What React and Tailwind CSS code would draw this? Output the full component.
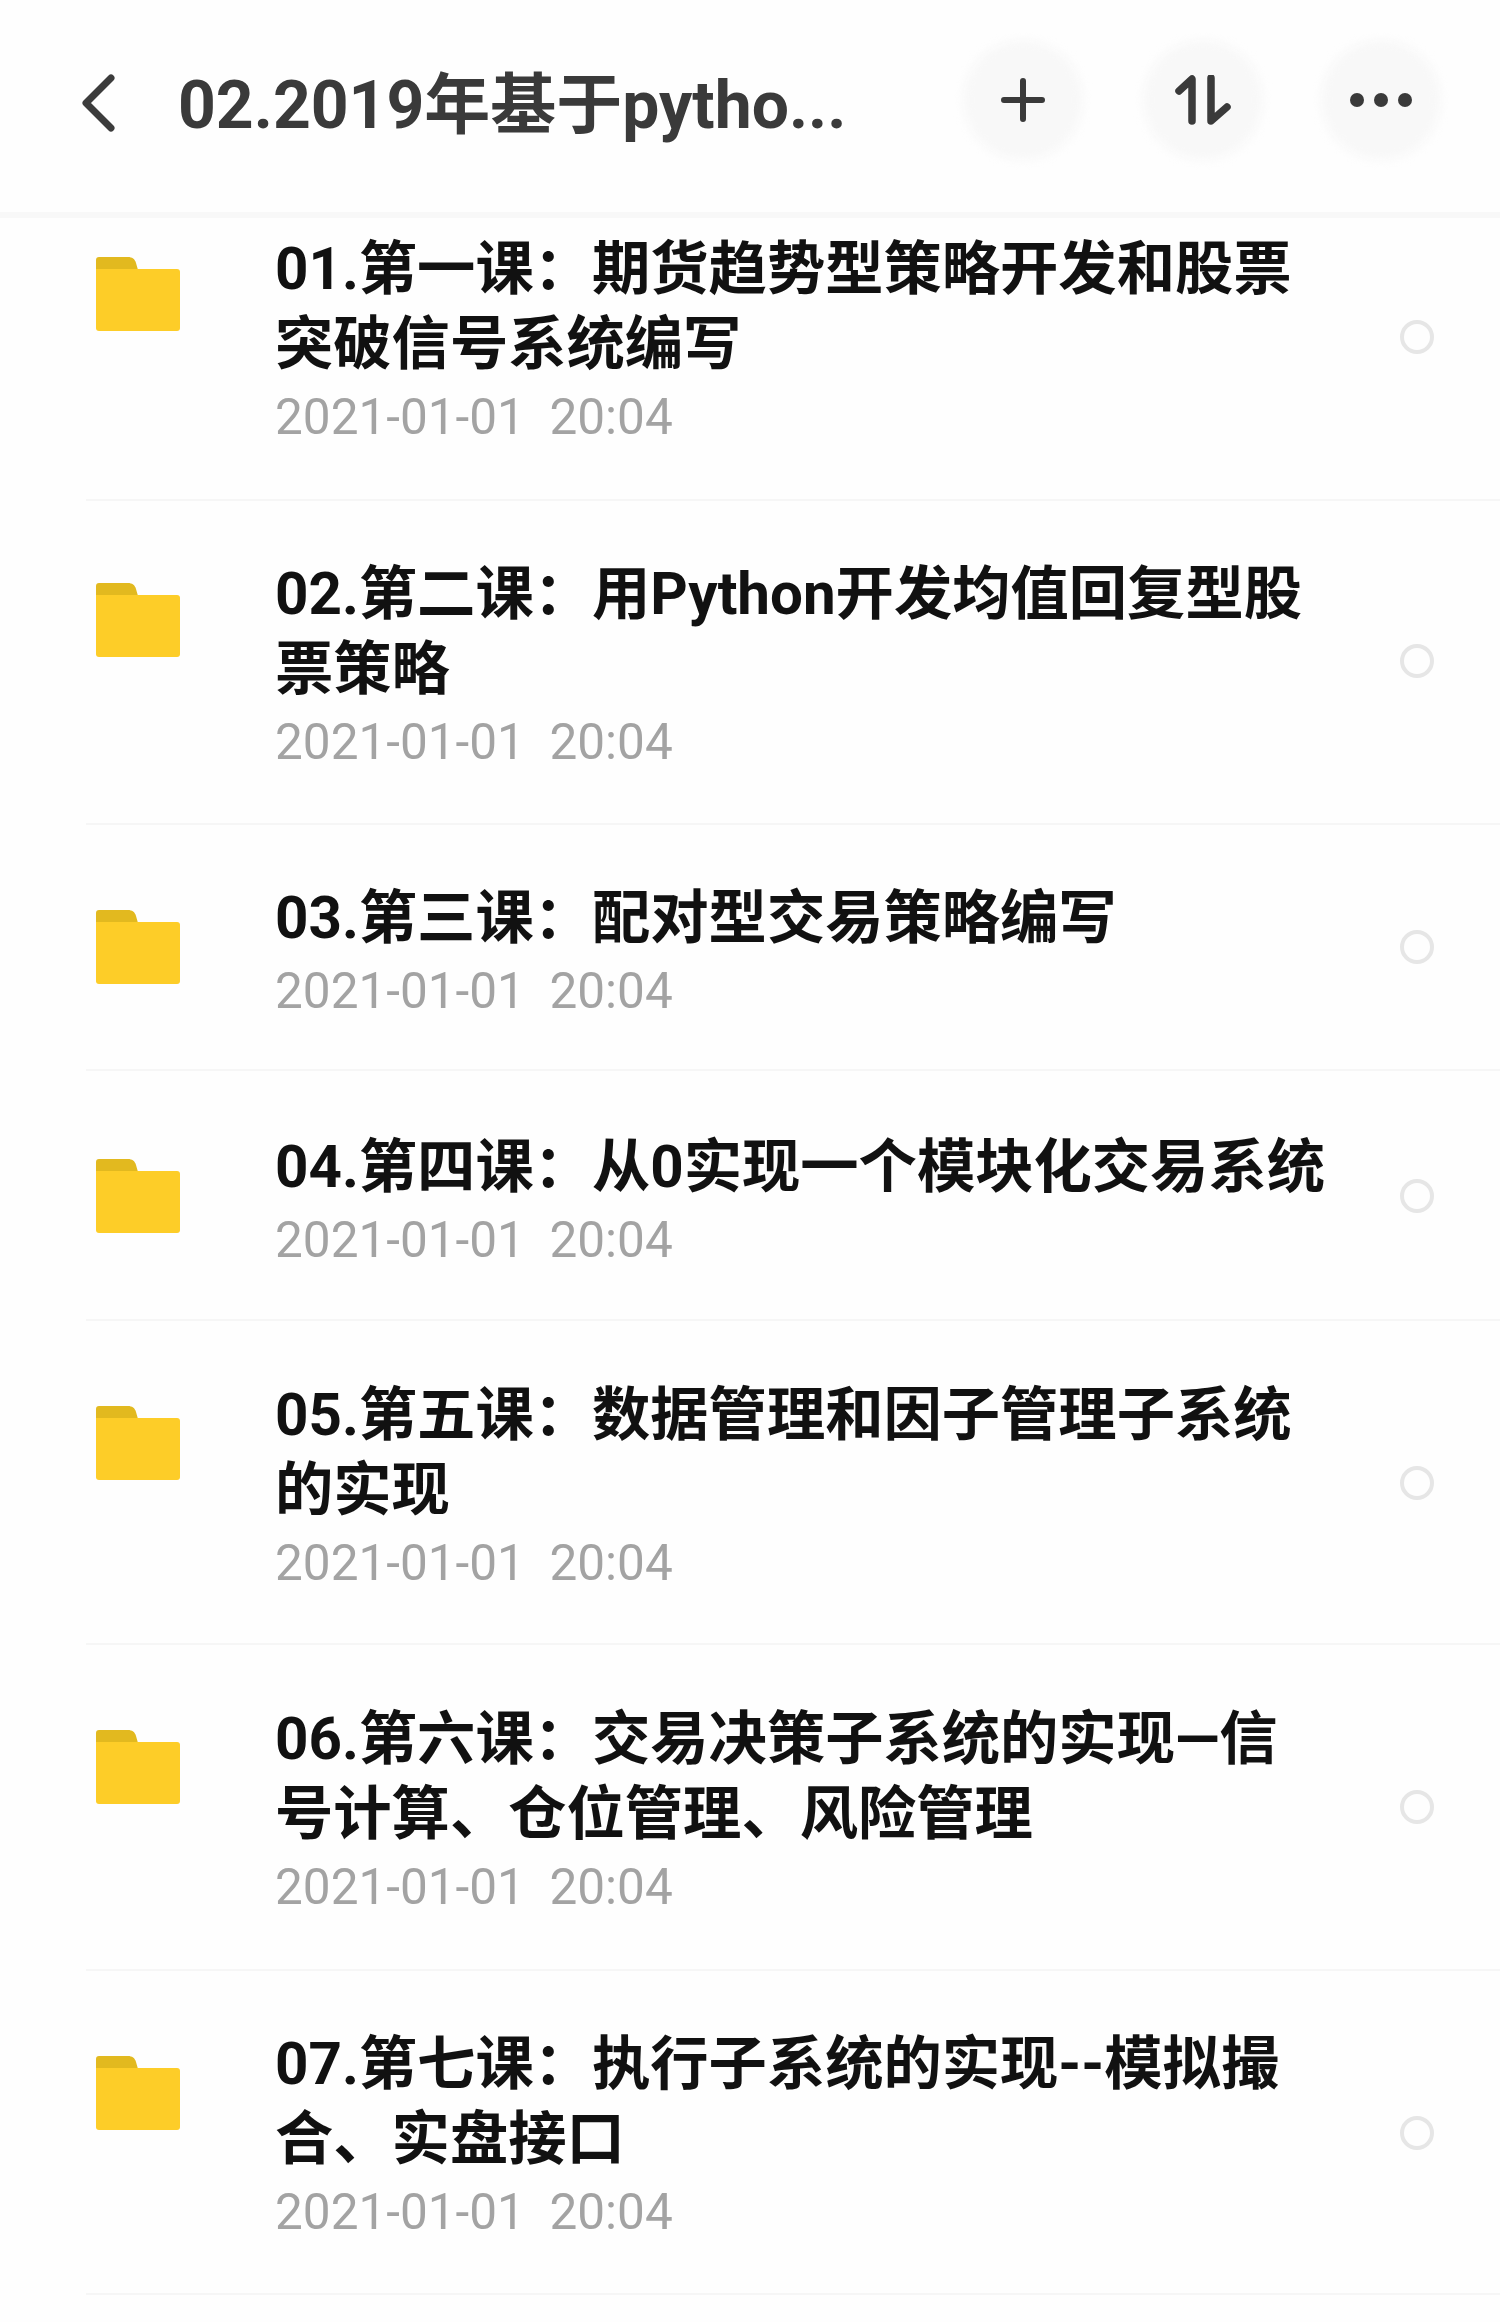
const rows = [
  { h: "h-[283px]", pt: "pt-[14px]", lines: ["01.第一课：期货趋势型策略开发和股票", "突破信号系统编写"], f: "mt-[39px]", r: "mt-[102px]" },
  { h: "h-[324px]", pt: "pt-[56px]", lines: ["02.第二课：用Python开发均值回复型股", "票策略"], f: "mt-[82px]", r: "mt-[143px]" },
  { h: "h-[246px]", pt: "pt-[56px]", lines: ["03.第三课：配对型交易策略编写"], f: "mt-[85px]", r: "mt-[105px]" },
  { h: "h-[250px]", pt: "pt-[59px]", lines: ["04.第四课：从0实现一个模块化交易系统"], f: "mt-[88px]", r: "mt-[108px]" },
  { h: "h-[324px]", pt: "pt-[57px]", lines: ["05.第五课：数据管理和因子管理子系统", "的实现"], f: "mt-[85px]", r: "mt-[145px]" },
  { h: "h-[326px]", pt: "pt-[57px]", lines: ["06.第六课：交易决策子系统的实现—信", "号计算、仓位管理、风险管理"], f: "mt-[85px]", r: "mt-[145px]" },
  { h: "h-[324px]", pt: "pt-[56px]", lines: ["07.第七课：执行子系统的实现--模拟撮", "合、实盘接口"], f: "mt-[85px]", r: "mt-[145px]" },
];

function Folder({ className }) {
  return (
    <svg viewBox="0 0 84 74" className={className}>
      <path d="M3 0H32C36 0 39 2 40 6L42 13H0V3C0 1 1 0 3 0Z" fill="#e2b91f" />
      <path d="M0 12H81C83 12 84 13 84 15V71C84 73 83 74 81 74H3C1 74 0 73 0 71Z" fill="#fdcd28" />
    </svg>
  );
}

function RoundButton({ children, className = "" }) {
  return (
    <div className={`relative w-[120px] h-[120px] flex items-center justify-center ${className}`}>
      <div className="absolute inset-0 rounded-full bg-[#f8f8f8] blur-[5px]" />
      <div className="relative">{children}</div>
    </div>
  );
}

export default function App() {
  return (
    <div className="w-[1500px] h-[2322px] overflow-hidden bg-[#fefefe] blur-[0.6px] font-['Roboto','Noto_Sans_CJK_SC',sans-serif]">
      <header className="h-[218px] flex items-center pl-[80px] pr-[59px] border-b-[6px] border-[#f8f8f8]">
        <svg viewBox="0 0 36 60" className="w-[36px] h-[60px] mr-[62px] mb-[6px] shrink-0">
          <path d="M31 5 L6 30 L31 55" fill="none" stroke="#3c3c3c" strokeWidth="7" strokeLinecap="round" strokeLinejoin="round" />
        </svg>
        <div className="flex-1 text-[66px] font-bold text-[#3a3a3a] whitespace-nowrap leading-none">02.2019年基于pytho...</div>
        <div className="flex mb-[12px]">
          <RoundButton className="mr-[60px]">
            <svg viewBox="0 0 44 44" className="w-[44px] h-[44px]">
              <path d="M22 3V41M3 22H41" stroke="#3a3a3a" strokeWidth="6" strokeLinecap="round" />
            </svg>
          </RoundButton>
          <RoundButton className="mr-[58px]">
            <svg viewBox="0 0 56 50" className="w-[56px] h-[50px]">
              <path d="M4 16L17 4V46" fill="none" stroke="#3a3a3a" strokeWidth="7.5" strokeLinecap="round" strokeLinejoin="round" />
              <path d="M36 3V46L52 32" fill="none" stroke="#3a3a3a" strokeWidth="7.5" strokeLinecap="round" strokeLinejoin="round" />
            </svg>
          </RoundButton>
          <RoundButton>
            <div className="flex gap-[10px]">
              <span className="w-[14px] h-[14px] rounded-full bg-[#3a3a3a]" />
              <span className="w-[14px] h-[14px] rounded-full bg-[#3a3a3a]" />
              <span className="w-[14px] h-[14px] rounded-full bg-[#3a3a3a]" />
            </div>
          </RoundButton>
        </div>
      </header>
      <main className="pl-[86px]">
        {rows.map((row, i) => (
          <div key={i} className={`${row.h} flex border-b-2 border-[#f6f6f6] box-border`}>
            <Folder className={`w-[84px] h-[74px] ml-[10px] shrink-0 ${row.f}`} />
            <div className={`ml-[95px] flex-1 ${row.pt}`}>
              {row.lines.map((l) => (
                <div key={l} className="text-[58.3px] leading-[75px] font-bold text-[#111111] whitespace-nowrap">{l}</div>
              ))}
              <div className="text-[49.5px] leading-[70px] text-[#a3a3a3] whitespace-pre">2021-01-01  20:04</div>
            </div>
            <div className={`w-[34px] h-[34px] rounded-full border-[4px] border-[#e6e6e6] mr-[66px] shrink-0 ${row.r}`} />
          </div>
        ))}
      </main>
    </div>
  );
}
